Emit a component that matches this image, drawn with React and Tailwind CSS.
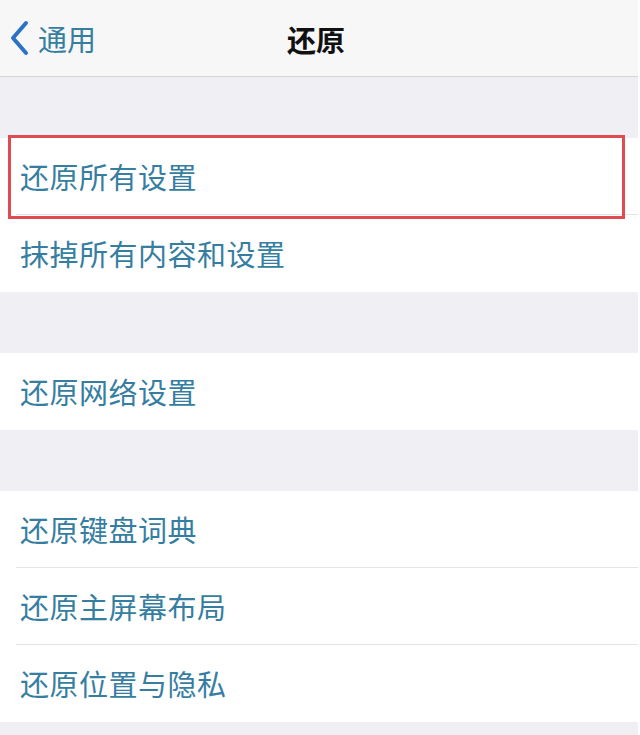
import React from "react";

const groups = [
  ["还原所有设置", "抹掉所有内容和设置"],
  ["还原网络设置"],
  ["还原键盘词典", "还原主屏幕布局", "还原位置与隐私"],
];

function Row({ text, last, highlight }) {
  return (
    <div className="relative h-[77px] bg-white">
      <div className="flex h-full items-center pl-5 text-[29px] leading-none tracking-[0.5px] text-[#367ea1]">
        {text}
      </div>
      {!last && (
        <div className="absolute bottom-0 left-4 right-0 h-px bg-[#e4e4e8]" />
      )}
      {highlight && (
        <div className="absolute left-2 top-[-3px] bottom-[-4px] z-10 w-[617px] border-[3px] border-[#e04a50]" />
      )}
    </div>
  );
}

export default function App() {
  return (
    <div
      className="h-[735px] w-[640px] overflow-hidden bg-white"
      style={{ fontFamily: '"Noto Sans CJK SC", "Noto Sans", sans-serif' }}
    >
      <div className="h-full w-[638px] bg-[#efeff4]">
        <header className="relative flex h-[77px] items-center justify-center border-b border-[#d6d6da] bg-[#f7f7f7]">
          <div className="absolute left-2 flex items-center gap-2">
            <svg width="22" height="36" viewBox="0 0 22 36" fill="none">
              <path
                d="M18 3 L5 18 L18 33"
                stroke="#2a73c4"
                strokeWidth="4"
                strokeLinecap="round"
                strokeLinejoin="round"
              />
            </svg>
            <span className="text-[29px] leading-none text-[#367ea1]">通用</span>
          </div>
          <span className="ml-[-6px] mt-[2px] text-[29px] font-bold leading-none text-[#111]">还原</span>
        </header>
        {groups.map((items, gi) => (
          <div key={gi} className="pt-[61px]">
            {items.map((t, i) => (
              <Row
                key={t}
                text={t}
                last={i === items.length - 1}
                highlight={gi === 0 && i === 0}
              />
            ))}
          </div>
        ))}
      </div>
    </div>
  );
}
